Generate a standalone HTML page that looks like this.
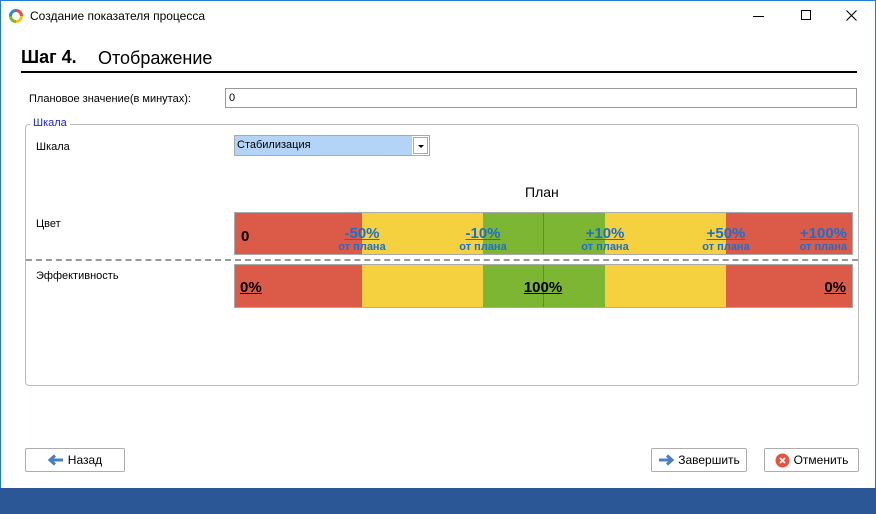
<!DOCTYPE html>
<html><head><meta charset="utf-8"><style>
*{margin:0;padding:0;box-sizing:border-box}
body{width:876px;height:514px;position:relative;overflow:hidden;background:#fff;font-family:"Liberation Sans",sans-serif;font-size:12px;color:#000}
.a{position:absolute}
.seg{position:absolute;top:0;bottom:0}
.lab{position:absolute;width:80px;text-align:center;color:#1a6fd0;font-weight:bold}
.lab b{display:block;font-size:15px;text-decoration:underline;line-height:17px}
.lab i{display:block;font-style:normal;font-size:11px;line-height:11px}
.btn{position:absolute;top:448px;height:24px;border:1px solid #adadad;border-radius:2px;background:#fff;font-size:12px;display:flex;align-items:center;justify-content:center;gap:4px}
</style></head><body>
<div class="a" style="left:0;top:0;width:876px;height:514px;border:1px solid #1e7bd6;border-bottom:none"></div>
<svg class="a" style="left:9px;top:9px" width="14" height="14" viewBox="0 0 14 14">
<path d="M7 1.5A5.5 5.5 0 0 1 12.5 7" stroke="#e74c3c" stroke-width="3" fill="none"/>
<path d="M12.5 7A5.5 5.5 0 0 1 7 12.5" stroke="#f5c518" stroke-width="3" fill="none"/>
<path d="M7 12.5A5.5 5.5 0 0 1 1.5 7" stroke="#7cb82f" stroke-width="3" fill="none"/>
<path d="M1.5 7A5.5 5.5 0 0 1 7 1.5" stroke="#2e86de" stroke-width="3" fill="none"/></svg>
<div class="a" style="left:30px;top:9px;font-size:12px">Создание показателя процесса</div>
<div class="a" style="left:753px;top:16px;width:11px;height:1px;background:#000"></div>
<div class="a" style="left:801px;top:10px;width:10px;height:10px;border:1px solid #000"></div>
<svg class="a" style="left:846px;top:10px" width="11" height="11"><path d="M0.5 0.5L10.5 10.5M10.5 0.5L0.5 10.5" stroke="#000" stroke-width="1.1"/></svg>
<div class="a" style="left:21px;top:47px;font-size:18px;font-weight:bold">Шаг 4.</div>
<div class="a" style="left:98px;top:48px;font-size:18px">Отображение</div>
<div class="a" style="left:21px;top:71px;width:836px;height:2px;background:#000"></div>
<div class="a" style="left:29px;top:93px;font-size:11px">Плановое значение(в минутах):</div>
<div class="a" style="left:225px;top:88px;width:632px;height:20px;border:1px solid #999;padding:3px 3px;font-size:11px">0</div>
<div class="a" style="left:25px;top:124px;width:834px;height:262px;border:1px solid #bbb;border-radius:4px"></div>
<div class="a" style="left:30px;top:117px;padding:0 3px;background:#fff;color:#2222dd;font-size:11px">Шкала</div>
<div class="a" style="left:36px;top:141px;font-size:11px">Шкала</div>
<div class="a" style="left:234px;top:135px;width:196px;height:21px;border:1px solid #aaa"></div>
<div class="a" style="left:235px;top:136px;width:177px;height:19px;background:#b3d4f7;font-size:11px;padding:3px 2px">Стабилизация</div>
<div class="a" style="left:413px;top:137px;width:15px;height:17px;border:1px solid #aaa;background:#fff"></div>
<div class="a" style="left:418px;top:145px;border-left:3px solid transparent;border-right:3px solid transparent;border-top:3px solid #000"></div>
<div class="a" style="left:525px;top:184px;font-size:14px">План</div>
<div class="a" style="left:36px;top:218px;font-size:11px">Цвет</div>
<div class="a" style="left:36px;top:270px;font-size:11px">Эффективность</div>
<div class="a" style="left:234px;top:212px;width:619px;height:43px;border:1px solid #aaa">
 <div class="seg" style="left:0;width:127px;background:#dc5a48"></div>
 <div class="seg" style="left:127px;width:121px;background:#f5d03f"></div>
 <div class="seg" style="left:248px;width:122px;background:#7db632"></div>
 <div class="seg" style="left:308px;width:1px;background:#5e8f22"></div>
 <div class="seg" style="left:370px;width:121px;background:#f5d03f"></div>
 <div class="seg" style="left:491px;width:126px;background:#dc5a48"></div>
 <div class="a" style="left:6px;top:15px;font-size:15px;font-weight:bold">0</div>
 <div class="lab" style="left:87px;top:12px"><b>-50%</b><i>от плана</i></div>
 <div class="lab" style="left:208px;top:12px"><b>-10%</b><i>от плана</i></div>
 <div class="lab" style="left:330px;top:12px"><b>+10%</b><i>от плана</i></div>
 <div class="lab" style="left:451px;top:12px"><b>+50%</b><i>от плана</i></div>
 <div class="lab" style="left:532px;top:12px;text-align:right"><b>+100%</b><i>от плана</i></div>
</div>
<div class="a" style="left:26px;top:259px;width:832px;border-top:2px dashed #999"></div>
<div class="a" style="left:234px;top:264px;width:619px;height:44px;border:1px solid #aaa">
 <div class="seg" style="left:0;width:127px;background:#dc5a48"></div>
 <div class="seg" style="left:127px;width:121px;background:#f5d03f"></div>
 <div class="seg" style="left:248px;width:122px;background:#7db632"></div>
 <div class="seg" style="left:308px;width:1px;background:#5e8f22"></div>
 <div class="seg" style="left:370px;width:121px;background:#f5d03f"></div>
 <div class="seg" style="left:491px;width:126px;background:#dc5a48"></div>
 <div class="a" style="left:5px;top:14px;font-size:15px;font-weight:bold;text-decoration:underline">0%</div>
 <div class="a" style="left:268px;width:80px;text-align:center;top:14px;font-size:15px;font-weight:bold;text-decoration:underline">100%</div>
 <div class="a" style="right:6px;top:14px;font-size:15px;font-weight:bold;text-decoration:underline">0%</div>
</div>
<div class="btn" style="left:25px;width:100px"><svg width="16" height="12"><path d="M15 6H3M7 1.5L2 6L7 10.5" stroke="#4a7fc1" stroke-width="3" fill="none"/></svg>Назад</div>
<div class="btn" style="left:651px;width:96px"><svg width="16" height="12"><path d="M1 6H13M9 1.5L14 6L9 10.5" stroke="#4a7fc1" stroke-width="3" fill="none"/></svg>Завершить</div>
<div class="btn" style="left:764px;width:95px"><svg width="15" height="15"><circle cx="7.5" cy="7.5" r="7" fill="#e8533f"/><path d="M5 5L10 10M10 5L5 10" stroke="#fff" stroke-width="1.8"/></svg>Отменить</div>
<div class="a" style="left:0;top:488px;width:876px;height:26px;background:#2b5797"></div>
</body></html>
